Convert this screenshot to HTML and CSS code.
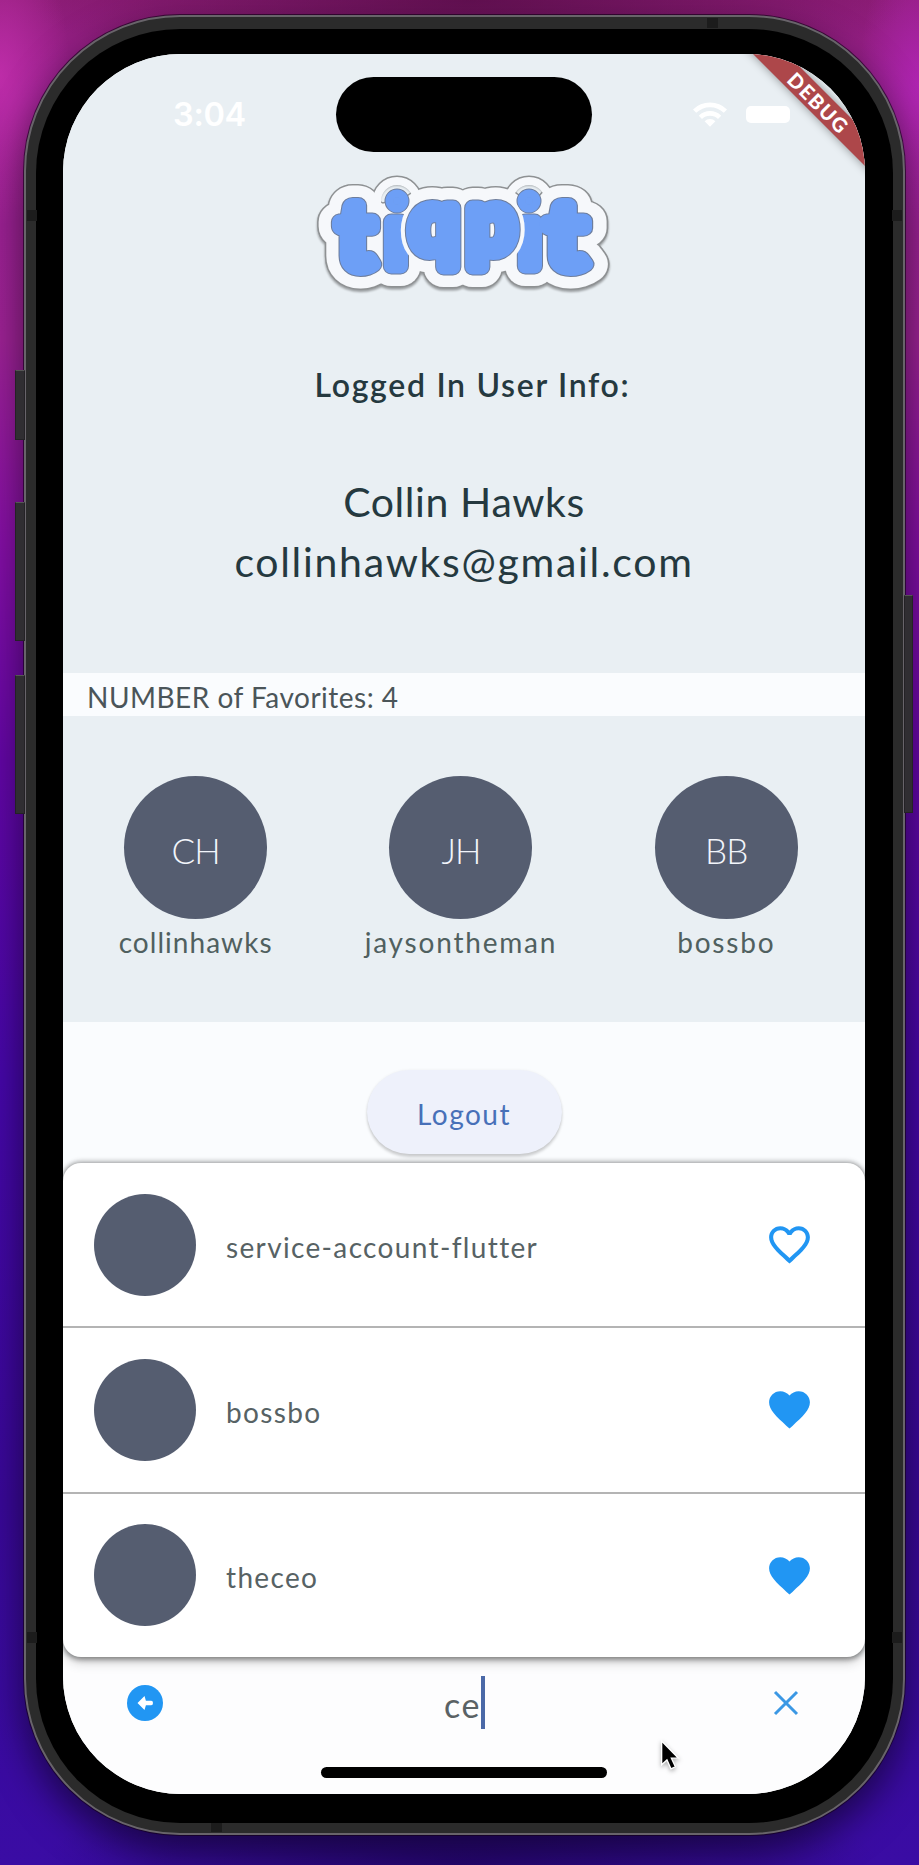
FILE: index.html
```
<!DOCTYPE html>
<html lang="en">
<head>
<meta charset="utf-8">
<title>tiqpit</title>
<link rel="stylesheet" href="styles.css">
</head>
<body>
<div class="desktop">
  <div class="phone">
    <span class="key key-action"></span>
    <span class="key key-up"></span>
    <span class="key key-down"></span>
    <span class="key key-power"></span>
    <span class="seam seam-l1"></span><span class="seam seam-l2"></span>
    <span class="seam seam-r1"></span><span class="seam seam-r2"></span>
    <span class="seam seam-t"></span><span class="seam seam-b"></span>
    <div class="bezel">
      <main class="screen">
        <section class="hero">
          <header class="status">
            <time class="clock">3:04</time>
            <span class="island"></span>
            <span class="signals">
              <svg class="wifi" viewBox="0 0 34 25"><g fill="none" stroke="#fff" stroke-width="4.6"><path d="M1.6 9.2a22 22 0 0 1 30.8 0"/><path d="M7.4 15.3a13.8 13.8 0 0 1 19.2 0"/></g><path fill="#fff" d="M11.6 19.3a7.7 7.7 0 0 1 10.8 0L17 24.8z"/></svg>
              <span class="battery"></span>
            </span>
          </header>
          <svg class="logo" viewBox="300 172 330 130" role="img" aria-label="tiqpit">
            <defs>
              <g id="sides">
                <text class="tall" transform="translate(339 268) scale(1.06 1)">t</text>
                <text class="low stem" x="397" y="266">ı</text><circle cx="398" cy="201" r="4"/>
                <text class="low stem" x="531" y="266">ı</text><circle cx="530" cy="201" r="4"/>
                <text class="tall" transform="translate(547 268) scale(1.16 1)">t</text>
              </g>
              <g id="middle"><text class="low" x="411" y="252">q</text><text class="low" x="468" y="252">p</text></g>
            </defs>
            <g class="logo-edge"><use href="#sides"/><use href="#middle"/></g>
            <g class="logo-paper"><use href="#sides"/><use href="#middle"/></g>
            <use class="logo-line" href="#sides"/><use class="logo-ink" href="#sides"/>
            <use class="logo-halo" href="#middle"/><use class="logo-line" href="#middle"/><use class="logo-ink" href="#middle"/>
          </svg>
          <h1 class="heading">Logged In User Info:</h1>
          <div class="profile"><p class="fullname">Collin Hawks</p><p class="email">collinhawks@gmail.com</p></div>
        </section>
        <p class="count">NUMBER of Favorites: 4</p>
        <section class="favorites">
          <div class="favorite"><span class="avatar">CH</span><span class="handle">collinhawks</span></div>
          <div class="favorite"><span class="avatar">JH</span><span class="handle handle-wide">jaysontheman</span></div>
          <div class="favorite"><span class="avatar">BB</span><span class="handle handle-wide">bossbo</span></div>
        </section>
        <section class="actions"><button class="logout">Logout</button></section>
        <section class="results">
          <div class="row"><span class="dot"></span><span class="name">service-account-flutter</span>
            <svg class="heart" viewBox="0 0 24 24"><path d="M16.5 3c-1.74 0-3.41.81-4.5 2.09C10.91 3.81 9.24 3 7.5 3 4.42 3 2 5.42 2 8.5c0 3.78 3.4 6.86 8.55 11.54L12 21.35l1.45-1.32C18.6 15.36 22 12.28 22 8.5 22 5.42 19.58 3 16.5 3zm-4.4 15.55l-.1.1-.1-.1C7.14 14.24 4 11.39 4 8.5 4 6.5 5.5 5 7.5 5c1.54 0 3.04.99 3.57 2.36h1.87C13.46 5.99 14.96 5 16.5 5c2 0 3.5 1.5 3.5 3.5 0 2.89-3.14 5.74-7.9 10.05z"/></svg></div>
          <div class="row"><span class="dot"></span><span class="name">bossbo</span>
            <svg class="heart" viewBox="0 0 24 24"><path d="M12 21.35l-1.45-1.32C5.4 15.36 2 12.28 2 8.5 2 5.42 4.42 3 7.5 3c1.74 0 3.41.81 4.5 2.09C13.09 3.81 14.76 3 16.5 3 19.58 3 22 5.42 22 8.5c0 3.78-3.4 6.86-8.55 11.54L12 21.35z"/></svg></div>
          <div class="row"><span class="dot"></span><span class="name">theceo</span>
            <svg class="heart" viewBox="0 0 24 24"><path d="M12 21.35l-1.45-1.32C5.4 15.36 2 12.28 2 8.5 2 5.42 4.42 3 7.5 3c1.74 0 3.41.81 4.5 2.09C13.09 3.81 14.76 3 16.5 3 19.58 3 22 5.42 22 8.5c0 3.78-3.4 6.86-8.55 11.54L12 21.35z"/></svg></div>
        </section>
        <footer class="search">
          <div class="search-bar">
            <svg class="back" viewBox="0 0 36 36"><circle cx="18" cy="18" r="18" fill="#2196f3"/><path d="M10.5 18l7-7 1.4 4.8h5.3q1.8 0 1.8 2.2t-1.8 2.2h-5.3l-1.4 4.8z" fill="#fff"/></svg>
            <span class="query">ce<i class="caret"></i></span>
            <svg class="close" viewBox="0 0 26 26"><path d="M2 2l22 22M24 2L2 24" stroke="#3b98e4" stroke-width="3" fill="none"/></svg>
          </div>
          <span class="home"></span>
        </footer>
        <span class="debug">DEBUG</span>
        <svg class="pointer" viewBox="0 0 26 38"><path d="M3 2v27l6-5.5 4.5 10 5-2.3-4.5-9.7h8z" fill="#000" stroke="#fff" stroke-width="1.5"/></svg>
      </main>
    </div>
  </div>
</div>
</body>
</html>
```

FILE: styles.css
```
* { box-sizing: border-box; }
body { margin: 0; font-family: Lato, "Liberation Sans", sans-serif; color: #25393f; }
h1, p { margin: 0; font-weight: 400; }
.desktop {
  width: 919px; height: 1865px; padding: 15px 14px 30px 24px; overflow: hidden;
  background:
    radial-gradient(70px 150px at 0 75px, rgba(205, 50, 180, .7), transparent),
    radial-gradient(60px 150px at 919px 85px, rgba(190, 40, 200, .6), transparent),
    radial-gradient(440px 90px at 470px 0, rgba(80, 10, 65, .7), transparent),
    radial-gradient(420px 90px at 460px 1865px, rgba(20, 0, 70, .5), transparent),
    linear-gradient(180deg, #8e1d78 0, #9a2092 100px, #9c2294 340px, #840fa4 540px, #6206a4 760px, #4507a8 1080px, #390898 1500px, #3a0ca4 1865px);
}
.phone {
  position: relative; width: 881px; height: 1820px; padding: 12px 10px 10px 10px;
  border: 2px solid #68646a; border-radius: 156px; background: #2b2b2b;
  box-shadow: 0 0 0 1px rgba(20, 0, 25, .65), 0 16px 38px rgba(0, 0, 0, .55);
}
.bezel { height: 100%; padding: 25px 27px 27px 27px; border-radius: 144px; background: #000; }
.screen { position: relative; display: flex; flex-direction: column; width: 802px; height: 1740px; border-radius: 118px; overflow: hidden; background: #fafcfe; }
.key { position: absolute; background: #302e32; border: 1px solid #242226; border-top-color: #555; }
.key-action { left: -11px; top: 353px; width: 10px; height: 70px; }
.key-up { left: -11px; top: 485px; width: 10px; height: 139px; }
.key-down { left: -11px; top: 658px; width: 10px; height: 139px; }
.key-power { right: -10px; top: 578px; width: 9px; height: 218px; }
.seam { position: absolute; background: #1c1c1c; }
.seam-l1, .seam-l2 { left: 1px; width: 10px; height: 11px; }
.seam-r1, .seam-r2 { right: 1px; width: 10px; height: 11px; }
.seam-l1, .seam-r1 { top: 193px; }
.seam-l2, .seam-r2 { top: 1615px; }
.seam-t { top: 1px; left: 681px; width: 11px; height: 10px; }
.seam-b { bottom: 1px; left: 185px; width: 11px; height: 9px; }

.hero { height: 619px; display: flex; flex-direction: column; align-items: center; background: #e9eff3; }
.status { width: 100%; height: 118px; padding: 3px 75px 0 110px; display: grid; grid-template-columns: 163px 256px 1fr; align-items: center; }
.clock { font: 600 32.5px/40px Inter, sans-serif; color: #fff; letter-spacing: -.3px; }
.island { height: 75px; border-radius: 38px; background: #000; }
.signals { display: flex; justify-content: flex-end; align-items: center; gap: 19px; }
.wifi { width: 34px; height: 25px; }
.battery { width: 44px; height: 17px; border-radius: 5px; background: #fff; }
.logo { width: 330px; height: 130px; font-family: Lato, sans-serif; font-weight: 700; stroke-linejoin: round; overflow: visible; }
.tall { font-size: 93px; font-weight: 600; }
.low { font-size: 86px; font-weight: 600; }
.stem { text-anchor: middle; }
.logo-edge { fill: #8e9193; stroke: #8e9193; stroke-width: 43px; filter: drop-shadow(0 2px 1px rgba(0, 0, 0, .35)); }
.logo-paper { fill: #f6f8fb; stroke: #f6f8fb; stroke-width: 40px; }
.logo-halo { fill: #f6f8fb; stroke: #f6f8fb; stroke-width: 25px; }
.logo-line { fill: #6d7d9c; stroke: #6d7d9c; stroke-width: 17px; }
.logo-ink { fill: #6d9ff6; stroke: #6d9ff6; stroke-width: 15px; }
.heading { margin: 63px 0 0 17px; font-size: 32px; font-weight: 600; line-height: 40px; letter-spacing: 1.7px; }
.profile { margin-top: 67px; text-align: center; font-size: 41px; line-height: 60px; }
.fullname { letter-spacing: .6px; }
.email { letter-spacing: 1.7px; }
.count { height: 43px; padding-left: 24px; font-size: 28px; line-height: 48px; color: #4b5559; letter-spacing: .5px; }
.favorites { height: 306px; padding-top: 60px; display: grid; grid-template-columns: repeat(3, 265.3px); background: #e9eff3; }
.favorite { display: flex; flex-direction: column; align-items: center; }
.avatar { width: 143px; height: 143px; border-radius: 50%; display: grid; place-items: center; padding-top: 5px; background: #555d70; color: #f2f5fb; font-size: 35px; font-weight: 300; letter-spacing: -1px; }
.handle { margin-top: 5px; font-size: 28px; line-height: 36px; color: #50605f; letter-spacing: 1.05px; }
.handle-wide { letter-spacing: 1.8px; }
.actions { height: 141px; padding-top: 48px; text-align: center; }
.logout { width: 195px; height: 84px; border: 0; border-radius: 42px; background: #eef1fb; color: #4770b8; font: 400 28px/36px Lato, sans-serif; padding: 4px 0 0; letter-spacing: 1.5px; box-shadow: 0 3px 3px rgba(0, 0, 0, .18), 0 0 3px rgba(0, 0, 0, .06); }
.results { position: relative; height: 494px; border-radius: 18px; background: #fff; box-shadow: 0 -2px 5px rgba(0, 0, 0, .2), 0 2px 5px 1px rgba(0, 0, 0, .36), 0 6px 12px rgba(0, 0, 0, .16); }
.row { height: 165.3px; padding: 0 51px 0 31px; display: flex; align-items: center; border-bottom: 2px solid #b4b4b4; }
.row:last-child { height: 163.3px; border-bottom: 0; }
.dot { width: 102px; height: 102px; border-radius: 50%; background: #555d70; }
.name { flex: 1; margin-left: 30px; padding-top: 4px; font-size: 28px; line-height: 36px; color: #576264; letter-spacing: 1.35px; }
.heart { width: 49px; height: 49px; fill: #2196f3; }
.search { height: 137px; display: flex; flex-direction: column; align-items: center; background: #fdfdfe; }
.search-bar { width: 100%; height: 110px; padding: 0 66px 18px 64px; display: flex; justify-content: space-between; align-items: center; }
.back { width: 36px; height: 36px; }
.close { width: 26px; height: 26px; }
.query { display: flex; align-items: center; margin-left: -7px; padding-top: 4px; font-size: 34px; line-height: 52px; color: #5a6265; letter-spacing: 1.6px; }
.caret { width: 4px; height: 53px; margin-top: -6px; background: #4b69a7; }
.home { width: 286px; height: 11px; border-radius: 6px; background: #000; }
.debug { position: absolute; right: -78px; top: 36px; width: 250px; height: 24px; padding-left: 2px; transform: rotate(45deg); background: #ad474a; color: #fff; text-align: center; font: 900 20px/24px Lato, sans-serif; letter-spacing: 1.5px; box-shadow: 0 0 10px rgba(0, 0, 0, .4); }
.pointer { position: absolute; left: 596px; top: 1685px; width: 23px; height: 34px; filter: drop-shadow(0 2px 2px rgba(0, 0, 0, .3)); }
```
